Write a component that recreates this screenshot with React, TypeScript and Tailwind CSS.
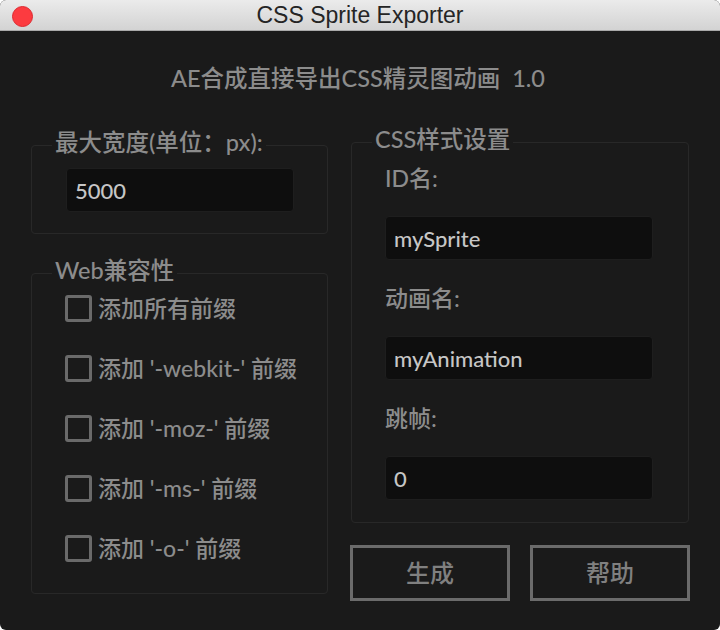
import { useState, type ReactNode } from "react";

const prefixes = ["添加所有前缀", "添加 '-webkit-' 前缀", "添加 '-moz-' 前缀", "添加 '-ms-' 前缀", "添加 '-o-' 前缀"];

const font = "font-['Lato','Noto_Sans_CJK_SC',sans-serif]";

function TextField({ value, onChange, className }: { value: string; onChange: (v: string) => void; className: string }) {
  return (
    <input
      value={value}
      onChange={(e) => onChange(e.target.value)}
      className={`${className} block h-[44px] bg-[#0e0e0e] border border-[#1e1e1e] rounded-[4px] px-[8px] text-[22px] text-[#c6c6c6] focus:outline-none ${font}`}
    />
  );
}

// bordered group box with its caption sitting on the top edge
function Group({ title, className, bodyClassName, children }: { title: string; className?: string; bodyClassName: string; children: ReactNode }) {
  return (
    <div className={`border border-[#282828] rounded-[4px] ${className ?? ""}`}>
      <div className="-mt-[19px] ml-[20px] w-fit px-[3px] bg-[#1a1a1a] leading-[30px] text-[23.5px] text-[#8c8c8c] whitespace-nowrap">{title}</div>
      <div className={bodyClassName}>{children}</div>
    </div>
  );
}

export default function App() {
  const [maxWidth, setMaxWidth] = useState("5000");
  const [idName, setIdName] = useState("mySprite");
  const [animName, setAnimName] = useState("myAnimation");
  const [skip, setSkip] = useState("0");
  const [checked, setChecked] = useState<boolean[]>(prefixes.map(() => false));

  function toggle(i: number) {
    setChecked(checked.map((c, j) => (j === i ? !c : c)));
  }

  return (
    <div className="w-[720px] h-[630px] bg-white">
      <div className="w-full h-full rounded-[6px] overflow-hidden flex flex-col bg-[#1a1a1a]">
        {/* title bar */}
        <div className="relative h-[31px] shrink-0 bg-gradient-to-b from-[#ebebeb] to-[#d3d3d3] border-b border-[#a9a9a9] flex items-center justify-center">
          <div className="absolute left-[12px] top-[6px] w-[21px] h-[21px] rounded-full bg-[#fc3b40] border border-[#dc2a30]" />
          <span className="text-[23px] leading-none text-[#252525] font-['Liberation_Sans',sans-serif]">CSS Sprite Exporter</span>
        </div>

        <div className={`flex-1 font-medium ${font}`}>
          <div className="mt-[31px] h-[32px] leading-[32px] text-center text-[23.5px] text-[#8c8c8c] pr-[4px]">
            AE合成直接导出CSS精灵图动画&nbsp;&nbsp;1.0
          </div>

          <div className="mt-[48px] flex items-start pl-[31px] gap-[22px]">
            {/* left column */}
            <div className="w-[297px] mt-[3px] flex flex-col gap-[39px]">
              <Group title="最大宽度(单位：px):" bodyClassName="pl-[34px] pr-[33px] pb-[21px]">
                <TextField value={maxWidth} onChange={setMaxWidth} className="mt-[11px] w-[228px]" />
              </Group>

              <Group title="Web兼容性" bodyClassName="pl-[33px] pb-[31px]">
                <div className="mt-[9px] flex flex-col gap-[32px]">
                  {prefixes.map((p, i) => (
                    <label key={p} className="h-[28px] flex items-center gap-[6px] cursor-pointer" onClick={() => toggle(i)}>
                      <span className="w-[27px] h-[27px] rounded-[3px] border-[3px] border-[#6a6a6a] flex items-center justify-center text-[16px] leading-none text-[#9a9a9a]">
                        {checked[i] ? "✓" : ""}
                      </span>
                      <span className="text-[23px] text-[#8c8c8c] leading-[28px]">{p}</span>
                    </label>
                  ))}
                </div>
              </Group>
            </div>

            {/* right column */}
            <div className="w-[340px] flex flex-col">
              <Group title="CSS样式设置" className="ml-px w-[338px]" bodyClassName="pl-[33px] pb-[22px]">
                <div className="mt-[9px] leading-[30px] text-[23px] text-[#8c8c8c]">ID名:</div>
                <TextField value={idName} onChange={setIdName} className="mt-[23px] w-[268px]" />
                <div className="mt-[23px] leading-[30px] text-[23px] text-[#8c8c8c]">动画名:</div>
                <TextField value={animName} onChange={setAnimName} className="mt-[23px] w-[268px]" />
                <div className="mt-[23px] leading-[30px] text-[23px] text-[#8c8c8c]">跳帧:</div>
                <TextField value={skip} onChange={setSkip} className="mt-[23px] w-[268px]" />
              </Group>

              <div className="mt-[22px] flex gap-[20px]">
                <button className="w-[160px] h-[56px] border-[3px] border-[#6b6b6b] text-[24px] text-[#808080]">生成</button>
                <button className="w-[160px] h-[56px] border-[3px] border-[#6b6b6b] text-[24px] text-[#808080]">帮助</button>
              </div>
            </div>
          </div>
        </div>
      </div>
    </div>
  );
}
